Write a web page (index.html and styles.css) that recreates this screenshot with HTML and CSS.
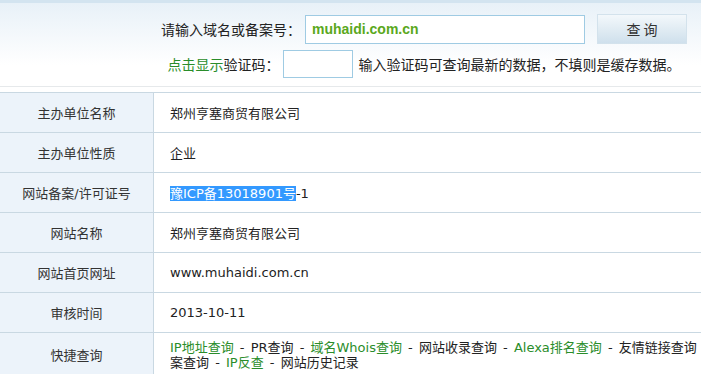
FILE: index.html
```html
<!DOCTYPE html>
<html>
<head>
  <meta charset="UTF-8" />
  <title>ICP备案查询</title>
  <link rel="stylesheet" href="styles.css">
</head>
<body>
  <div class="page">
    <div class="search">
      <form class="search-form">
        <div class="line">
          <label for="domain">请输入域名或备案号：</label>
          <input type="text" id="domain" class="domain" value="muhaidi.com.cn" />
          <button type="submit" class="btn">查 询</button>
        </div>
        <div class="line">
          <a href="#" class="green">点击显示</a><label for="code">验证码：</label>
          <input type="text" id="code" class="code" />
          <span class="tip">输入验证码可查询最新的数据，不填则是缓存数据。</span>
        </div>
      </form>
    </div>

    <table class="info">
      <tr>
        <th>主办单位名称</th>
        <td>郑州亨塞商贸有限公司</td>
      </tr>
      <tr>
        <th>主办单位性质</th>
        <td>企业</td>
      </tr>
      <tr>
        <th>网站备案/许可证号</th>
        <td><span class="selected">豫ICP备13018901号</span>-1</td>
      </tr>
      <tr>
        <th>网站名称</th>
        <td>郑州亨塞商贸有限公司</td>
      </tr>
      <tr>
        <th>网站首页网址</th>
        <td>www.muhaidi.com.cn</td>
      </tr>
      <tr>
        <th>审核时间</th>
        <td>2013-10-11</td>
      </tr>
      <tr>
        <th>快捷查询</th>
        <td class="links">
          <a href="#" class="green">IP地址查询</a> - <a href="#">PR查询</a> - <a href="#" class="green">域名Whois查询</a> - <a href="#">网站收录查询</a> - <a href="#" class="green">Alexa排名查询</a> - <a href="#">友情链接查询</a> - <a href="#">备案查询</a> - <a href="#" class="green">IP反查</a> - <a href="#">网站历史记录</a>
        </td>
      </tr>
    </table>
  </div>
</body>
</html>
```

FILE: styles.css
```css
html, body {
  margin: 0;
  overflow: hidden;
  background: #fff;
}

.page {
  width: 848px;
  font-family: "DejaVu Sans", "Noto Sans CJK SC", sans-serif;
  color: #222;
}

.search {
  height: 83px;
  border-top: 3px solid #d3e4f0;
  border-bottom: 1px solid #e6e9eb;
  background: linear-gradient(#e8f1f8, #ffffff 75%);
  margin-bottom: 5px;
}

.search-form {
  padding-top: 10px;
  font-size: 14px;
}

.line {
  display: flex;
  justify-content: center;
  align-items: center;
  height: 32px;
}

.line + .line {
  margin-top: 3px;
}

.domain {
  box-sizing: border-box;
  width: 280px;
  height: 29px;
  margin-left: 4px;
  padding: 0 6px;
  border: 1px solid #9fcbe3;
  font-family: "Liberation Sans", sans-serif;
  font-weight: bold;
  font-size: 14px;
  color: #5aa81c;
}

.btn {
  box-sizing: border-box;
  width: 90px;
  height: 30px;
  margin-left: 12px;
  border: 1px solid #d3e2ec;
  background: linear-gradient(#f3f8fb, #cfe0ec);
  font-family: "Noto Sans CJK SC", sans-serif;
  font-size: 14px;
  color: #333;
}

.code {
  box-sizing: border-box;
  width: 70px;
  height: 28px;
  margin-left: 3px;
  border: 1px solid #9fcbe3;
}

.tip {
  margin-left: 6px;
}

a {
  color: #222;
  text-decoration: none;
}

a.green {
  color: #2a8d2a;
}

.info {
  width: 100%;
  border-collapse: collapse;
  font-size: 13px;
}

.info th,
.info td {
  height: 39px;
  border-top: 1px solid #c9d8e2;
  padding: 0;
}

.info th {
  width: 153px;
  border-right: 1px solid #c9d8e2;
  background: #ecf3fa;
  font-weight: normal;
  color: #333;
}

.info td {
  padding-left: 16px;
  color: #222;
}

.info .links {
  height: 43px;
  line-height: 15px;
  padding-right: 112px;
  word-spacing: 2px;
}

.selected {
  background: #3399ff;
  color: #fff;
}
```
